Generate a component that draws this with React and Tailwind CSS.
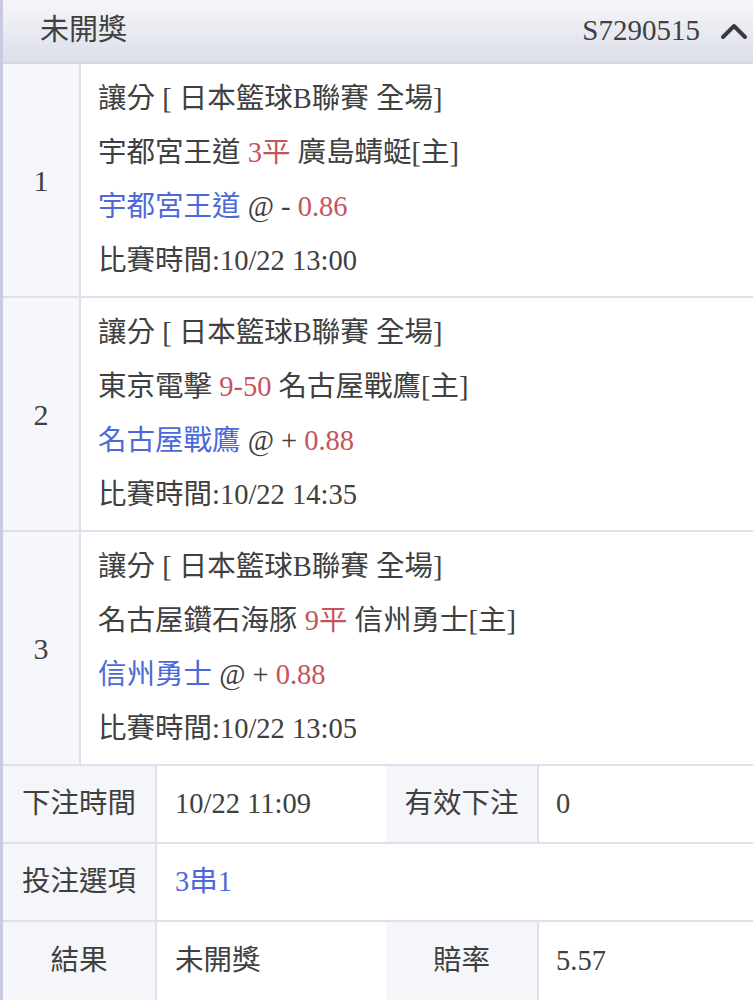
const font = { fontFamily: '"Liberation Serif", "Noto Sans CJK TC", serif' };

const matches = [
  {
    no: "1",
    home: "宇都宮王道",
    line: "3平",
    away: "廣島蜻蜓[主]",
    pick: "宇都宮王道",
    sign: "-",
    odds: "0.86",
    time: "10/22 13:00",
  },
  {
    no: "2",
    home: "東京電擊",
    line: "9-50",
    away: "名古屋戰鷹[主]",
    pick: "名古屋戰鷹",
    sign: "+",
    odds: "0.88",
    time: "10/22 14:35",
  },
  {
    no: "3",
    home: "名古屋鑽石海豚",
    line: "9平",
    away: "信州勇士[主]",
    pick: "信州勇士",
    sign: "+",
    odds: "0.88",
    time: "10/22 13:05",
  },
];

function ChevronUp() {
  return (
    <svg width="28" height="18" viewBox="0 0 28 18" fill="none">
      <path d="M3 15 L14 4 L25 15" stroke="#3a3a3a" strokeWidth="4" strokeLinecap="round" strokeLinejoin="round" />
    </svg>
  );
}

function MatchRow({ m }) {
  return (
    <div className="flex h-[234px] border-b-2 border-[#dfe0ee]">
      <div className="w-[78px] shrink-0 bg-[#f6f7fb] border-r-2 border-[#dfe0ee] flex items-center justify-center text-[30px] text-[#404040]">
        {m.no}
      </div>
      <div className="flex-1 bg-white pl-[17px] pt-[8px] text-[28.5px] leading-[54px] text-[#404040]">
        <div>讓分 [ 日本籃球B聯賽 全場]</div>
        <div>
          {m.home} <span className="text-[#c4555b]">{m.line}</span> {m.away}
        </div>
        <div>
          <span className="text-[#4d69d8]">{m.pick}</span> @ {m.sign}{" "}
          <span className="text-[#c4555b]">{m.odds}</span>
        </div>
        <div>比賽時間:{m.time}</div>
      </div>
    </div>
  );
}

export default function App() {
  return (
    <div className="w-[753px] h-[1000px] overflow-hidden bg-white" style={font}>
      <div className="border-l-[3px] border-[#c8cae0]">
        <div className="h-[64px] flex items-center justify-between pl-[37px] pr-[5px] bg-gradient-to-b from-[#f6f6fa] to-[#dcdee9] border-b-2 border-[#d4d6e6] text-[29px] text-[#404040]">
          <span>未開獎</span>
          <div className="flex items-center gap-[20px]">
            <span>S7290515</span>
            <ChevronUp />
          </div>
        </div>

        {matches.map((m) => (
          <MatchRow key={m.no} m={m} />
        ))}

        <div className="flex h-[78px] border-b-2 border-[#dfe0ee] text-[28.5px] text-[#404040]">
          <div className="w-[154px] shrink-0 bg-[#f5f6fa] border-r-2 border-[#dfe0ee] flex items-center justify-center">下注時間</div>
          <div className="w-[229px] shrink-0 flex items-center pl-[18px] text-[28.5px]">10/22 11:09</div>
          <div className="w-[153px] shrink-0 bg-[#f5f6fa] border-r-2 border-[#dfe0ee] flex items-center justify-center">有效下注</div>
          <div className="flex-1 flex items-center pl-[17px] text-[28.5px]">0</div>
        </div>
        <div className="flex h-[78px] border-b-2 border-[#dfe0ee] text-[28.5px] text-[#404040]">
          <div className="w-[154px] shrink-0 bg-[#f5f6fa] border-r-2 border-[#dfe0ee] flex items-center justify-center">投注選項</div>
          <div className="flex-1 flex items-center pl-[18px] text-[#4d69d8]">3串1</div>
        </div>
        <div className="flex h-[80px] border-b-2 border-[#dfe0ee] text-[28.5px] text-[#404040]">
          <div className="w-[154px] shrink-0 bg-[#f5f6fa] border-r-2 border-[#dfe0ee] flex items-center justify-center">結果</div>
          <div className="w-[229px] shrink-0 flex items-center pl-[18px]">未開獎</div>
          <div className="w-[153px] shrink-0 bg-[#f5f6fa] border-r-2 border-[#dfe0ee] flex items-center justify-center">賠率</div>
          <div className="flex-1 flex items-center pl-[17px] text-[28.5px]">5.57</div>
        </div>
      </div>
    </div>
  );
}
